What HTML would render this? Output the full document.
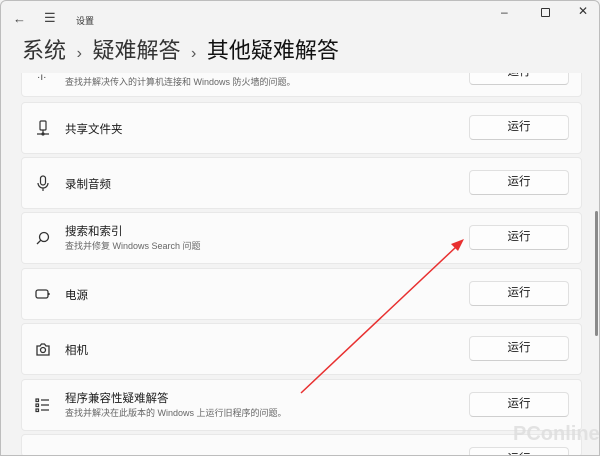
<!DOCTYPE html><html><head><meta charset="utf-8"><style>
*{margin:0;padding:0;box-sizing:border-box}
html,body{width:600px;height:456px;overflow:hidden}
body{background:#f3f3f3;font-family:"Liberation Sans","Noto Sans CJK SC",sans-serif;position:relative;color:#1a1a1a}
.win{position:absolute;left:0;top:0;width:600px;height:456px;border:1px solid #bdbdbd;border-radius:6px 6px 0 0;background:#f3f3f3;overflow:hidden}
.abs{position:absolute}
.card{position:absolute;left:20px;width:561px;height:52px;background:#fbfbfb;border:1px solid #e8e8e8;border-radius:4px}
.t{position:absolute;left:43px;font-size:11.5px;color:#1a1a1a}
.d{position:absolute;left:43px;font-size:9px;color:#666}
.btn{position:absolute;left:447px;width:100px;height:25px;background:#fdfdfd;border:1px solid #e0e0e0;border-bottom-color:#cfcfcf;border-radius:4px;font-size:11.5px;text-align:center;line-height:23px}
.ic{position:absolute;left:12px;top:16px;width:18px;height:18px}
</style></head><body><div class="win">
<div class="abs" style="left:12px;top:10px;font-size:13px;color:#444">←</div>
<div class="abs" style="left:43px;top:9px;font-size:13px;color:#444">☰</div>
<div class="abs" style="left:75px;top:13px;font-size:9px;color:#333">设置</div>
<div class="abs" style="left:500px;top:4px;font-size:12px;color:#333">–</div>
<div class="abs" style="left:540px;top:7px;width:9px;height:9px;border:1px solid #333;border-radius:1px"></div>
<div class="abs" style="left:577px;top:3px;font-size:12px;color:#333">✕</div>
<div class="abs" style="left:21px;top:32px;font-size:22px;color:#333;white-space:nowrap">系统 <span style="font-size:16px;color:#555">&nbsp;›&nbsp;</span> 疑难解答 <span style="font-size:16px;color:#555">&nbsp;›&nbsp;</span> <span style="color:#111">其他疑难解答</span></div>
<div class="abs" style="left:0;top:72px;width:600px;height:384px;overflow:hidden">
 <div class="card" style="top:-30px;height:54px"><div class="d" style="top:28px;left:15px;font-size:10px;color:#444">·ı·</div><div class="d" style="top:31px">查找并解决传入的计算机连接和 Windows 防火墙的问题。</div><div class="btn" style="top:16px">运行</div></div>
 <div class="card" style="top:29px"><svg class="ic" viewBox="0 0 18 18" fill="none" stroke="#333" stroke-width="1.2"><rect x="6" y="2" width="6" height="9" rx="1"/><path d="M9 11v3M3 15h12"/><circle cx="9" cy="15" r="1"/></svg><div class="t" style="top:18px">共享文件夹</div><div class="btn" style="top:12px">运行</div></div>
 <div class="card" style="top:84px"><svg class="ic" viewBox="0 0 18 18" fill="none" stroke="#333" stroke-width="1.2"><rect x="6.5" y="2" width="5" height="9" rx="2.5"/><path d="M4 9a5 5 0 0 0 10 0M9 14v3"/></svg><div class="t" style="top:18px">录制音频</div><div class="btn" style="top:12px">运行</div></div>
 <div class="card" style="top:139px"><svg class="ic" viewBox="0 0 18 18" fill="none" stroke="#333" stroke-width="1.3"><circle cx="10" cy="8" r="4.5"/><path d="M6.8 11.2 3 15"/></svg><div class="t" style="top:10px">搜索和索引</div><div class="d" style="top:26px">查找并修复 Windows Search 问题</div><div class="btn" style="top:12px">运行</div></div>
 <div class="card" style="top:195px"><svg class="ic" viewBox="0 0 18 18" fill="none" stroke="#333" stroke-width="1.3"><rect x="2" y="5" width="12" height="8" rx="2"/><path d="M15 8v2"/></svg><div class="t" style="top:18px">电源</div><div class="btn" style="top:12px">运行</div></div>
 <div class="card" style="top:250px"><svg class="ic" viewBox="0 0 18 18" fill="none" stroke="#333" stroke-width="1.3"><path d="M3 6h3l1.5-2h3L12 6h3v9H3z"/><circle cx="9" cy="10" r="2.5"/></svg><div class="t" style="top:18px">相机</div><div class="btn" style="top:12px">运行</div></div>
 <div class="card" style="top:306px"><svg class="ic" viewBox="0 0 18 18" fill="none" stroke="#333" stroke-width="1.2"><rect x="2" y="3" width="2.5" height="2.5"/><rect x="2" y="8" width="2.5" height="2.5"/><rect x="2" y="13" width="2.5" height="2.5"/><path d="M7 4h8M7 9h8M7 14h8"/></svg><div class="t" style="top:10px">程序兼容性疑难解答</div><div class="d" style="top:26px">查找并解决在此版本的 Windows 上运行旧程序的问题。</div><div class="btn" style="top:12px">运行</div></div>
 <div class="card" style="top:361px;height:23px"><div class="btn" style="top:12px;height:11px">运行</div></div>
</div>
<div class="abs" style="left:594px;top:210px;width:3px;height:125px;background:#8a8a8a;border-radius:2px"></div>
<svg class="abs" style="left:0;top:0" width="600" height="456"><line x1="300" y1="392" x2="455" y2="246" stroke="#e83030" stroke-width="1.5"/><path d="M463 238 L450 243 L457 250Z" fill="#e83030"/></svg>
<div class="abs" style="left:512px;top:422px;font-size:20px;color:#ddd;font-weight:bold;opacity:.8">PConline</div>
</div></body></html>
